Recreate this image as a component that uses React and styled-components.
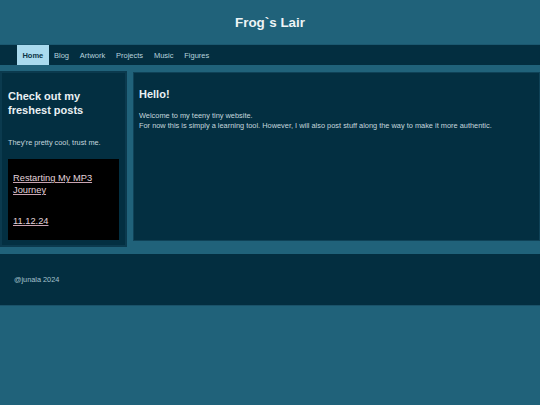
import React from "react";
import styled, { createGlobalStyle } from "styled-components";

const Global = createGlobalStyle`
  html, body {
    margin: 0;
    padding: 0;
    background: #20627a;
    font-family: "Liberation Sans", Arial, sans-serif;
  }
  * { box-sizing: border-box; }
`;

const Page = styled.div`
  width: 540px;
  min-height: 405px;
  background: #20627a;
`;

const Header = styled.header`
  height: 44px;
  display: flex;
  align-items: center;
  justify-content: center;
`;

const Title = styled.h1`
  margin: 0;
  font-size: 13.4px;
  font-weight: bold;
  color: #eef4f6;
  line-height: 16px;
  padding-top: 1px;
`;

const Nav = styled.nav`
  height: 21px;
  background: #032e40;
  border-top: 1px solid #1b5870;
  display: flex;
  padding-left: 17px;
`;

const NavLink = styled.a`
  display: flex;
  align-items: center;
  height: 100%;
  padding: 0 5.4px;
  font-size: 7.5px;
  text-decoration: none;
  color: ${(p) => (p.$active ? "#0b3446" : "#b7d3de")};
  background: ${(p) => (p.$active ? "#a9daee" : "transparent")};
  font-weight: ${(p) => (p.$active ? "bold" : "normal")};
`;

const Main = styled.main`
  display: flex;
  align-items: flex-start;
  gap: 6px;
  margin-top: 6px;
`;

const Sidebar = styled.aside`
  width: 127px;
  flex: none;
  background: #032f41;
  border: 2px solid #0b3a4e;
  padding: 6px 6px 5px;
`;

const Heading = styled.h2`
  margin: 9.6px 0 0;
  font-size: 11px;
  line-height: 14.7px;
  font-weight: bold;
  color: #eaf1f4;
`;

const SideText = styled.p`
  margin: 20px 0 0;
  font-size: 7.33px;
  line-height: 10px;
  color: #c6d7de;
`;

const PostBox = styled.div`
  margin-top: 10.7px;
  background: #000;
  padding: 14.5px 5px 0;
  height: 81px;
`;

const PostLink = styled.a`
  display: block;
  font-size: 9.3px;
  line-height: 11.7px;
  color: #e4d4dc;
  text-decoration: underline;
  text-decoration-color: #c9a4b2;
  margin-top: ${(p) => p.$gap || "0"};
`;

const Content = styled.section`
  flex: 1;
  height: 169px;
  margin-top: 1px;
  background: #032f41;
  border: 1px solid #0f4257;
  padding: 13.6px 5px 0;
`;

const Hello = styled.h2`
  margin: 0;
  font-size: 11px;
  line-height: 14.7px;
  font-weight: bold;
  color: #eaf1f4;
`;

const Para = styled.p`
  margin: 9.8px 0 0;
  font-size: 7.4px;
  line-height: 9.8px;
  color: #c6d7de;
`;

const Footer = styled.footer`
  margin-top: 7px;
  height: 52px;
  background: #032e40;
  border-bottom: 1px solid #1a5269;
  display: flex;
  align-items: center;
  padding-left: 14px;
`;

const FootText = styled.span`
  font-size: 7.33px;
  color: #a3c2ce;
`;

const navItems = ["Home", "Blog", "Artwork", "Projects", "Music", "Figures"];

export default function App() {
  return (
    <Page>
      <Global />
      <Header>
        <Title>Frog`s Lair</Title>
      </Header>
      <Nav>
        {navItems.map((n) => (
          <NavLink key={n} href="#" $active={n === "Home"}>
            {n}
          </NavLink>
        ))}
      </Nav>
      <Main>
        <Sidebar>
          <Heading>
            Check out my
            <br />
            freshest posts
          </Heading>
          <SideText>They're pretty cool, trust me.</SideText>
          <PostBox>
            <PostLink href="#">
              Restarting My MP3
              <br />
              Journey
            </PostLink>
            <PostLink href="#" $gap="19.6px">
              11.12.24
            </PostLink>
          </PostBox>
        </Sidebar>
        <Content>
          <Hello>Hello!</Hello>
          <Para>
            Welcome to my teeny tiny website.
            <br />
            For now this is simply a learning tool. However, I will also post
            stuff along the way to make it more authentic.
          </Para>
        </Content>
      </Main>
      <Footer>
        <FootText>@junala 2024</FootText>
      </Footer>
    </Page>
  );
}
